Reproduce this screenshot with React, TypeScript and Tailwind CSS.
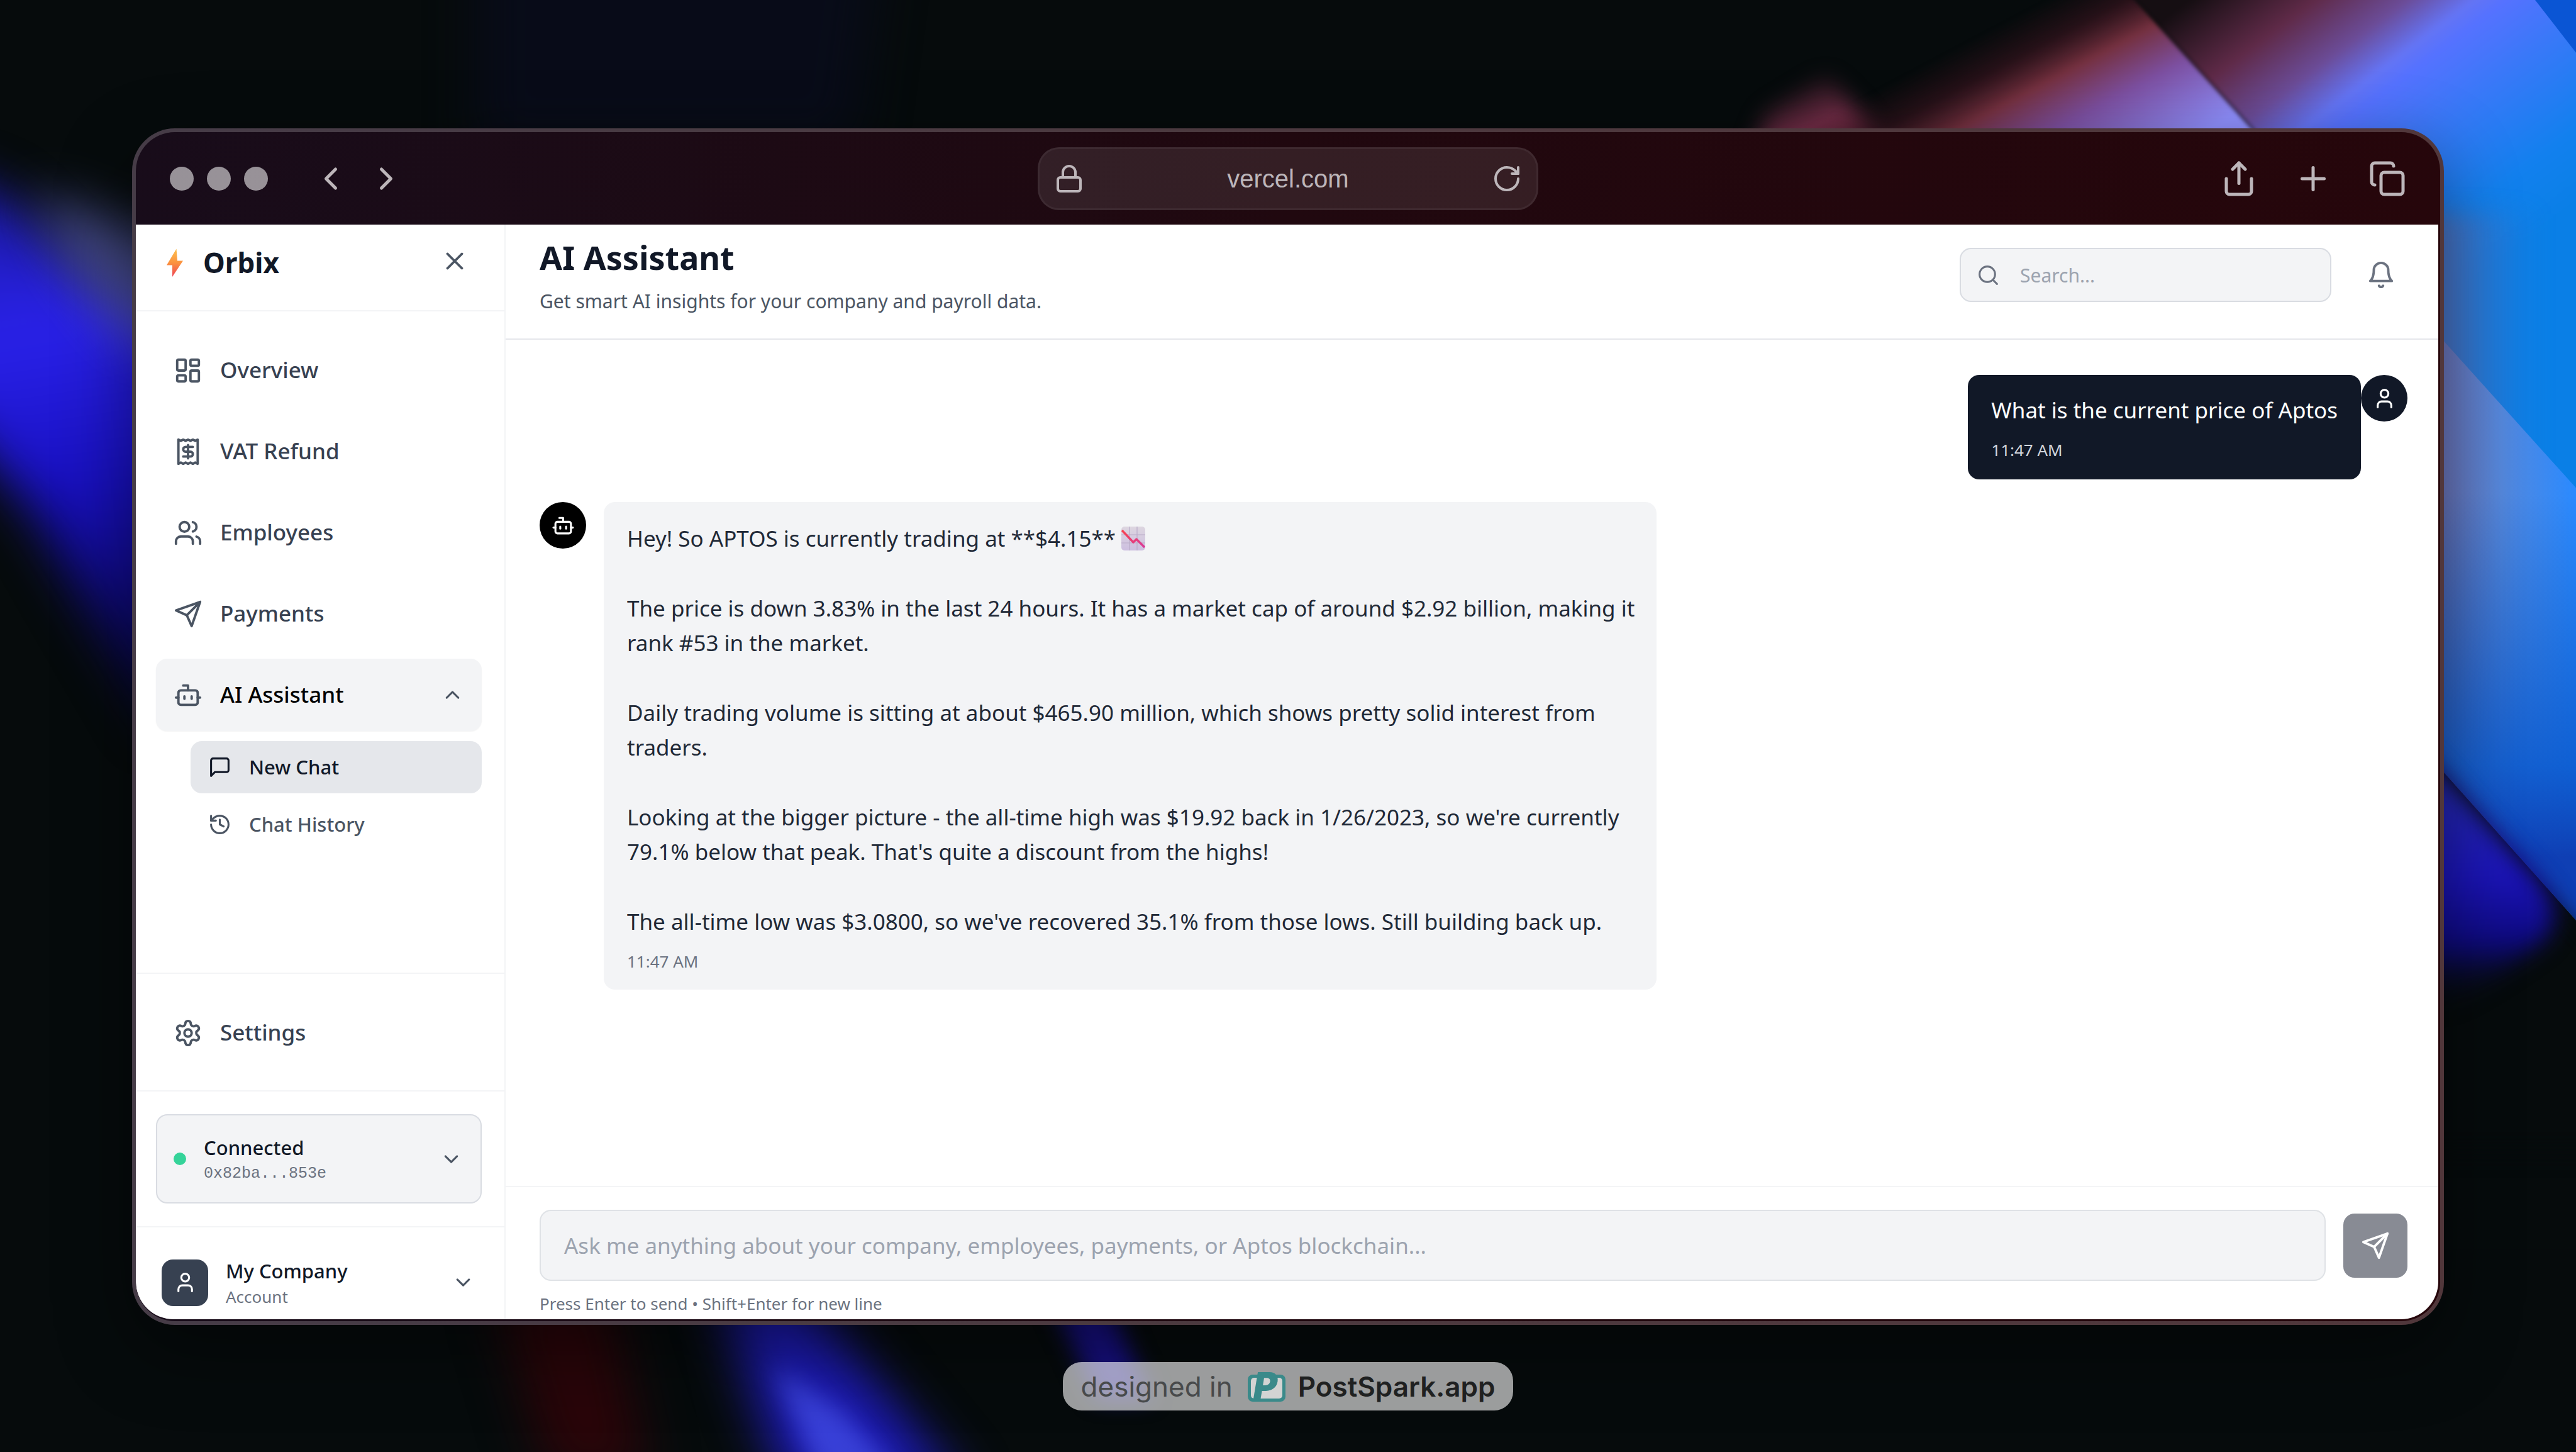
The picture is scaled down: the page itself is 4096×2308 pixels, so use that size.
import React from "react";

type IconProps = { className?: string; children: React.ReactNode };

function Icon({ className, children }: IconProps) {
  return (
    <svg
      viewBox="0 0 24 24"
      fill="none"
      stroke="currentColor"
      strokeWidth="2"
      strokeLinecap="round"
      strokeLinejoin="round"
      aria-hidden="true"
      className={`shrink-0 ${className ?? ""}`}
    >
      {children}
    </svg>
  );
}

const DashboardIcon = () => (
  <Icon className="size-[46px]">
    <rect x="3" y="3" width="7" height="9" rx="1" />
    <rect x="14" y="3" width="7" height="5" rx="1" />
    <rect x="14" y="12" width="7" height="9" rx="1" />
    <rect x="3" y="16" width="7" height="5" rx="1" />
  </Icon>
);

const ReceiptIcon = () => (
  <Icon className="size-[46px]">
    <path d="M4 2v20l2-1 2 1 2-1 2 1 2-1 2 1 2-1 2 1V2l-2 1-2-1-2 1-2-1-2 1-2-1-2 1Z" />
    <path d="M16 8h-6a2 2 0 1 0 0 4h4a2 2 0 1 1 0 4H8" />
    <path d="M12 17.5v-11" />
  </Icon>
);

const UsersIcon = () => (
  <Icon className="size-[46px]">
    <path d="M16 21v-2a4 4 0 0 0-4-4H6a4 4 0 0 0-4 4v2" />
    <circle cx="9" cy="7" r="4" />
    <path d="M22 21v-2a4 4 0 0 0-3-3.87" />
    <path d="M16 3.13a4 4 0 0 1 0 7.75" />
  </Icon>
);

const SendIcon = () => (
  <Icon className="size-[46px]">
    <path d="m22 2-7 20-4-9-9-4Z" />
    <path d="M22 2 11 13" />
  </Icon>
);

const BotIcon = ({ className }: { className: string }) => (
  <Icon className={className}>
    <path d="M12 8V4H8" />
    <rect width="16" height="12" x="4" y="8" rx="2" />
    <path d="M2 14h2" />
    <path d="M20 14h2" />
    <path d="M15 13v2" />
    <path d="M9 13v2" />
  </Icon>
);

const GearIcon = () => (
  <Icon className="size-[46px]">
    <path d="M12.22 2h-.44a2 2 0 0 0-2 2v.18a2 2 0 0 1-1 1.73l-.43.25a2 2 0 0 1-2 0l-.15-.08a2 2 0 0 0-2.73.73l-.22.38a2 2 0 0 0 .73 2.73l.15.1a2 2 0 0 1 1 1.72v.51a2 2 0 0 1-1 1.74l-.15.09a2 2 0 0 0-.73 2.73l.22.38a2 2 0 0 0 2.73.73l.15-.08a2 2 0 0 1 2 0l.43.25a2 2 0 0 1 1 1.73V20a2 2 0 0 0 2 2h.44a2 2 0 0 0 2-2v-.18a2 2 0 0 1 1-1.73l.43-.25a2 2 0 0 1 2 0l.15.08a2 2 0 0 0 2.73-.73l.22-.39a2 2 0 0 0-.73-2.73l-.15-.08a2 2 0 0 1-1-1.74v-.5a2 2 0 0 1 1-1.74l.15-.09a2 2 0 0 0 .73-2.73l-.22-.38a2 2 0 0 0-2.73-.73l-.15.08a2 2 0 0 1-2 0l-.43-.25a2 2 0 0 1-1-1.73V4a2 2 0 0 0-2-2z" />
    <circle cx="12" cy="12" r="3" />
  </Icon>
);

const UserIcon = ({ className }: { className: string }) => (
  <Icon className={className}>
    <path d="M19 21v-2a4 4 0 0 0-4-4H9a4 4 0 0 0-4 4v2" />
    <circle cx="12" cy="7" r="4" />
  </Icon>
);

const ChevronDown = () => (
  <Icon className="size-[37px] text-[#4b5563]">
    <path d="m6 9 6 6 6-6" />
  </Icon>
);

function Wallpaper() {
  return (
    <svg
      viewBox="0 0 1568 883"
      preserveAspectRatio="none"
      className="absolute inset-0 size-full"
      aria-hidden="true"
    >
      <defs>
        <filter id="b2" colorInterpolationFilters="sRGB" x="-50%" y="-50%" width="200%" height="200%"><feGaussianBlur stdDeviation="1.5" /></filter>
        <filter id="b8" colorInterpolationFilters="sRGB" x="-60%" y="-60%" width="220%" height="220%"><feGaussianBlur stdDeviation="7" /></filter>
        <filter id="b18" colorInterpolationFilters="sRGB" x="-80%" y="-80%" width="260%" height="260%"><feGaussianBlur stdDeviation="15" /></filter>
        <linearGradient id="blob" gradientUnits="userSpaceOnUse" x1="1090" y1="48" x2="1104" y2="84">
          <stop offset="0" stopColor="#8a3454" stopOpacity="0" />
          <stop offset="1" stopColor="#8a3454" />
        </linearGradient>
        <linearGradient id="wedge" gradientUnits="userSpaceOnUse" x1="1148" y1="52" x2="1202" y2="154">
          <stop offset="0" stopColor="#2a1018" stopOpacity="0" />
          <stop offset="0.2" stopColor="#30131c" stopOpacity="0.8" />
          <stop offset="0.38" stopColor="#74303f" />
          <stop offset="0.62" stopColor="#7c4fa0" />
          <stop offset="1" stopColor="#8f90ff" />
        </linearGradient>
        <linearGradient id="sky" gradientUnits="userSpaceOnUse" x1="1328" y1="4" x2="1472" y2="196">
          <stop offset="0" stopColor="#150e12" />
          <stop offset="0.19" stopColor="#5f2a48" />
          <stop offset="0.33" stopColor="#6b4c98" />
          <stop offset="0.43" stopColor="#6474f4" />
          <stop offset="0.48" stopColor="#5572ff" />
          <stop offset="0.62" stopColor="#3a78f8" />
          <stop offset="0.85" stopColor="#1280ee" />
          <stop offset="1" stopColor="#0a7fe6" />
        </linearGradient>
        <linearGradient id="haze" gradientUnits="userSpaceOnUse" x1="1485" y1="0" x2="1545" y2="0">
          <stop offset="0" stopColor="#4f70bc" />
          <stop offset="1" stopColor="#2a78d8" stopOpacity="0" />
        </linearGradient>
        <linearGradient id="lilac" gradientUnits="userSpaceOnUse" x1="1485" y1="320" x2="1568" y2="320">
          <stop offset="0" stopColor="#6c74b8" />
          <stop offset="0.45" stopColor="#5588dc" />
          <stop offset="1" stopColor="#2a8aff" />
        </linearGradient>
        <linearGradient id="deep" gradientUnits="userSpaceOnUse" x1="1528" y1="300" x2="1522" y2="520">
          <stop offset="0" stopColor="#0c55c0" stopOpacity="0" />
          <stop offset="0.75" stopColor="#0a58cc" stopOpacity="0.85" />
          <stop offset="1" stopColor="#0f3fb4" />
        </linearGradient>
        <linearGradient id="indigo" gradientUnits="userSpaceOnUse" x1="1520" y1="480" x2="1526" y2="612">
          <stop offset="0" stopColor="#2428b4" />
          <stop offset="0.4" stopColor="#1b14b8" />
          <stop offset="0.7" stopColor="#0e0a80" />
          <stop offset="1" stopColor="#060b0c" stopOpacity="0" />
        </linearGradient>
        <linearGradient id="left" gradientUnits="userSpaceOnUse" x1="10" y1="120" x2="60" y2="440">
          <stop offset="0" stopColor="#1c1aa8" />
          <stop offset="0.25" stopColor="#2a22ea" />
          <stop offset="0.55" stopColor="#1810c0" />
          <stop offset="1" stopColor="#06043c" />
        </linearGradient>
      </defs>
      <rect width="1568" height="883" fill="#060b0c" />
      <path d="M290-60 H540 L520 90 H290Z" fill="#090c1c" opacity="0.8" filter="url(#b18)" />

      <path d="M-80 90 L0 118 L60 175 L160 215 V440 L95 440 L20 310 L-80 200Z" fill="url(#left)" filter="url(#b18)" />
      <path d="M20 115 L70 135 L150 165 V225 L75 205 L40 160Z" fill="#6a70cc" opacity="0.6" filter="url(#b18)" />

      <path d="M1055 130 L1075 70 L1112 46 L1142 82 L1180 130Z" fill="url(#blob)" filter="url(#b8)" />
      <path d="M1100 110 V-10 H1291 L1400 110Z" fill="url(#wedge)" filter="url(#b2)" />
      <path d="M1291-10 L1400 110 V340 H1600 V-10Z" fill="url(#sky)" filter="url(#b2)" />
      <path d="M1540-4 L1568 32 V-4Z" fill="#0a55d4" />
      <path d="M1470 130 H1580 V320 H1470Z" fill="url(#haze)" filter="url(#b8)" />
      <path d="M1450 460 H1640 V760 H1450Z" fill="#060b0c" />
      <path d="M1470 188 L1580 310 V573 L1470 450Z" fill="url(#lilac)" />
      <path d="M1470 188 L1580 310 V573 L1470 450Z" fill="url(#deep)" />
      <path d="M1440 422 L1600 600 V700 H1440Z" fill="#060b0c" filter="url(#b8)" />
      <path d="M1440 420 L1540 529 Q1564 554 1548 572 Q1510 602 1440 645Z" fill="url(#indigo)" filter="url(#b8)" />

      <path d="M300 780 H370 L395 900 H335Z" fill="#2a0509" filter="url(#b18)" />
      <path d="M435 780 H485 L590 910 H480Z" fill="#1c1ab0" filter="url(#b18)" />
      <path d="M470 830 L512 858 L550 900 H500Z" fill="#4450e8" opacity="0.7" filter="url(#b8)" />
      <path d="M635 780 H670 L700 850 L668 850Z" fill="#160f80" filter="url(#b8)" />
    </svg>
  );
}

function BrowserBar() {
  return (
    <header className="grid h-[147px] shrink-0 grid-cols-[1fr_796px_1fr] items-center px-[54px] text-[#bdb6ba]">
      <div className="flex items-center">
        <div className="flex gap-[21px]">
          <span className="size-[38px] rounded-full bg-white/55" />
          <span className="size-[38px] rounded-full bg-white/55" />
          <span className="size-[38px] rounded-full bg-white/55" />
        </div>
        <div className="ml-[70px] flex gap-7">
          <button aria-label="Back">
            <Icon className="size-[60px]"><path d="m15 18-6-6 6-6" /></Icon>
          </button>
          <button aria-label="Forward">
            <Icon className="size-[60px]"><path d="m9 18 6-6-6-6" /></Icon>
          </button>
        </div>
      </div>
      <div className="flex h-[100px] items-center justify-between rounded-[34px] border-3 border-white/5 bg-white/9 px-[23px] font-['Liberation_Sans',sans-serif] text-[40px]">
        <Icon className="size-[48px]">
          <rect width="18" height="11" x="3" y="11" rx="2" />
          <path d="M7 11V7a5 5 0 0 1 10 0v4" />
        </Icon>
        <span>vercel.com</span>
        <button aria-label="Reload">
          <Icon className="size-[48px]">
            <path d="M21 12a9 9 0 1 1-9-9c2.52 0 4.93 1 6.74 2.74L21 8" />
            <path d="M21 3v5h-5" />
          </Icon>
        </button>
      </div>
      <div className="flex justify-end gap-[58px]">
        <button aria-label="Share">
          <Icon className="size-[60px]">
            <path d="M4 12v8a2 2 0 0 0 2 2h12a2 2 0 0 0 2-2v-8" />
            <path d="m16 6-4-4-4 4" />
            <path d="M12 2v13" />
          </Icon>
        </button>
        <button aria-label="New tab">
          <Icon className="size-[60px]"><path d="M5 12h14" /><path d="M12 5v14" /></Icon>
        </button>
        <button aria-label="Tabs">
          <Icon className="size-[60px]">
            <rect width="14" height="14" x="8" y="8" rx="2" />
            <path d="M4 16c-1.1 0-2-.9-2-2V4c0-1.1.9-2 2-2h10c1.1 0 2 .9 2 2" />
          </Icon>
        </button>
      </div>
    </header>
  );
}

function NavLink({ icon, label }: { icon: React.ReactNode; label: string }) {
  return (
    <a href="#" className="flex h-[115px] items-center gap-7 rounded-[18px] px-7 text-[35px] font-medium text-[#374151]">
      <span className="text-[#4b5563]">{icon}</span>
      {label}
    </a>
  );
}

function Sidebar() {
  return (
    <aside className="flex w-[588px] shrink-0 flex-col border-r-2 border-gray-100">
      <div className="flex h-[138px] shrink-0 items-start justify-between border-b-2 border-gray-100 pl-[49px] pr-14 pt-7">
        <div className="flex items-center gap-8">
          <svg viewBox="0 0 26 45" className="h-[45px] w-[26px]" aria-hidden="true">
            <defs>
              <linearGradient id="bolt" x1="0" y1="0" x2="0" y2="1">
                <stop offset="0" stopColor="#fdc04e" />
                <stop offset="0.5" stopColor="#fb923f" />
                <stop offset="1" stopColor="#ee4356" />
              </linearGradient>
            </defs>
            <path d="M15.5 0.5 L0 26.5 H9 V45 L26 19.5 H17Z" fill="url(#bolt)" />
          </svg>
          <span className="text-[44px] leading-[64px] font-bold text-[#111827]">Orbix</span>
        </div>
        <button aria-label="Close sidebar" className="mt-[7px] text-[#4b5563]">
          <Icon className="size-[46px]"><path d="M18 6 6 18" /><path d="m6 6 12 12" /></Icon>
        </button>
      </div>

      <nav className="flex flex-1 flex-col gap-3.5 pt-9 pl-8 pr-9">
        <NavLink icon={<DashboardIcon />} label="Overview" />
        <NavLink icon={<ReceiptIcon />} label="VAT Refund" />
        <NavLink icon={<UsersIcon />} label="Employees" />
        <NavLink icon={<SendIcon />} label="Payments" />
        <div>
          <button className="flex h-[115px] w-full items-center gap-7 rounded-[18px] bg-gray-100 px-7 text-left text-[35px] font-medium text-black shadow-xs">
            <BotIcon className="size-[46px] text-[#4b5563]" />
            <span className="flex-1">AI Assistant</span>
            <Icon className="size-[37px] text-[#4b5563]"><path d="m18 15-6-6-6 6" /></Icon>
          </button>
          <div className="mt-4 flex flex-col gap-2 pl-[55px]">
            <a href="#" className="flex h-[83px] items-center gap-7 rounded-[18px] bg-gray-200 px-7 text-[31px] font-medium text-[#111827]">
              <Icon className="size-[37px]">
                <path d="M21 15a2 2 0 0 1-2 2H7l-4 4V5a2 2 0 0 1 2-2h14a2 2 0 0 1 2 2z" />
              </Icon>
              New Chat
            </a>
            <a href="#" className="flex h-[83px] items-center gap-7 rounded-[18px] px-7 text-[31px] font-medium text-[#4b5563]">
              <Icon className="size-[37px]">
                <path d="M3 12a9 9 0 1 0 9-9 9.75 9.75 0 0 0-6.74 2.74L3 8" />
                <path d="M3 3v5h5" />
                <path d="M12 7v5l4 2" />
              </Icon>
              Chat History
            </a>
          </div>
        </div>
      </nav>

      <div className="border-t-2 border-gray-100 pb-[34px] pt-9 pl-8 pr-9">
        <NavLink icon={<GearIcon />} label="Settings" />
      </div>

      <div className="border-t-2 border-gray-100 py-9 pl-8 pr-9">
        <button className="flex h-[142px] w-full items-center rounded-[18px] border-2 border-[#d9dce2] bg-gray-100 pl-[26px] pr-7 text-left">
          <span className="size-[20px] rounded-full bg-[#34d399]" />
          <span className="ml-7 flex flex-1 flex-col">
            <span className="text-[31px] leading-[46px] font-medium text-[#111827]">Connected</span>
            <span className="font-['Liberation_Mono',monospace] text-[25px] leading-[37px] text-[#6b7280]">0x82ba...853e</span>
          </span>
          <ChevronDown />
        </button>
      </div>

      <div className="border-t-2 border-gray-100 pb-[17px] pl-[41px] pr-[47px] pt-[46px]">
        <button className="flex w-full items-center gap-7 text-left">
          <span className="flex size-[74px] items-center justify-center rounded-[18px] bg-[#374151] text-white">
            <UserIcon className="size-[37px]" />
          </span>
          <span className="flex flex-1 flex-col">
            <span className="text-[31px] leading-[46px] font-medium text-[#111827]">My Company</span>
            <span className="text-[26px] leading-[37px] text-[#6b7280]">Account</span>
          </span>
          <ChevronDown />
        </button>
      </div>
    </aside>
  );
}

function ChartDown() {
  return (
    <svg viewBox="0 0 38 38" role="img" aria-label="Chart decreasing" className="inline-block size-[38px] align-[-6px]">
      <defs>
        <linearGradient id="paper" x1="0" y1="0" x2="0" y2="1">
          <stop offset="0" stopColor="#ddd6e0" />
          <stop offset="1" stopColor="#cdbfe0" />
        </linearGradient>
        <linearGradient id="fall" x1="0" y1="0" x2="1" y2="1">
          <stop offset="0" stopColor="#f8434f" />
          <stop offset="1" stopColor="#d93a9a" />
        </linearGradient>
      </defs>
      <rect width="38" height="38" rx="5" fill="url(#paper)" />
      <path d="M13 0V38M25 0V38M0 13H38M0 26H38" stroke="#b9acc8" strokeWidth="1.2" />
      <path d="M1 6 L19 25 L24 20 L37 33" fill="none" stroke="url(#fall)" strokeWidth="3.4" strokeLinejoin="round" />
    </svg>
  );
}

function Chat() {
  return (
    <section className="flex flex-1 flex-col gap-9 pl-[54px] pr-[49px] pt-[56px]">
      <div className="flex items-start justify-end">
        <div className="rounded-[18px] bg-[#111827] px-[37px] py-7 text-white">
          <p className="text-[35px] leading-[55px]">What is the current price of Aptos</p>
          <p className="mt-[18px] text-[26px] leading-[37px] text-gray-300">11:47 AM</p>
        </div>
        <span className="flex size-[74px] items-center justify-center rounded-full bg-[#111827] text-white">
          <UserIcon className="size-[37px]" />
        </span>
      </div>
      <div className="flex items-start gap-7">
        <span className="flex size-[74px] shrink-0 items-center justify-center rounded-full bg-black text-white">
          <BotIcon className="size-[37px]" />
        </span>
        <div className="max-w-[1674px] rounded-[18px] bg-gray-100 pb-[26px] pl-[37px] pr-7 pt-[30px] text-[#1f2937]">
          <div className="flex flex-col gap-14 text-[35px] leading-[55px]">
            <p>Hey! So APTOS is currently trading at **$4.15** <ChartDown /></p>
            <p>The price is down 3.83% in the last 24 hours. It has a market cap of around $2.92 billion, making it rank #53 in the market.</p>
            <p>Daily trading volume is sitting at about $465.90 million, which shows pretty solid interest from traders.</p>
            <p>Looking at the bigger picture - the all-time high was $19.92 back in 1/26/2023, so we're currently 79.1% below that peak. That's quite a discount from the highs!</p>
            <p>The all-time low was $3.0800, so we've recovered 35.1% from those lows. Still building back up.</p>
          </div>
          <p className="mt-[18px] text-[26px] leading-[37px] text-[#6b7280]">11:47 AM</p>
        </div>
      </div>
    </section>
  );
}

function Main() {
  return (
    <main className="flex min-w-0 flex-1 flex-col">
      <div className="flex items-center justify-between border-b-2 border-gray-200 pb-[36px] pl-[54px] pr-[49px] pt-[15px]">
        <div>
          <h1 className="text-[52px] leading-[74px] font-bold text-[#111827]">AI Assistant</h1>
          <p className="mt-2.5 text-[30px] leading-[46px] text-[#4b5563]">Get smart AI insights for your company and payroll data.</p>
        </div>
        <div className="flex items-center gap-[37px]">
          <label className="flex h-[86px] w-[591px] items-center gap-8 rounded-[18px] border-2 border-[#d9dce2] bg-gray-100 px-[25px] text-[#6b7280]">
            <Icon className="size-[37px]"><circle cx="11" cy="11" r="8" /><path d="m21 21-4.3-4.3" /></Icon>
            <input type="search" aria-label="Search" placeholder="Search..." className="min-w-0 flex-1 bg-transparent text-[30px] outline-none placeholder:text-[#9ca3af]" />
          </label>
          <button aria-label="Notifications" className="flex size-[84px] items-center justify-center text-[#6b7280]">
            <Icon className="size-[46px]">
              <path d="M6 8a6 6 0 0 1 12 0c0 7 3 9 3 9H3s3-2 3-9" />
              <path d="M10.3 21a1.94 1.94 0 0 0 3.4 0" />
            </Icon>
          </button>
        </div>
      </div>
      <Chat />
      <form className="border-t-2 border-gray-100 pb-1.5 pl-[54px] pr-[49px] pt-9">
        <div className="flex items-center gap-7">
          <textarea
            rows={1}
            aria-label="Message"
            placeholder="Ask me anything about your company, employees, payments, or Aptos blockchain..."
            className="h-[113px] min-w-0 flex-1 resize-none rounded-[18px] border-2 border-[#dfe2e6] bg-gray-100 px-[37px] py-[27px] text-[35px] leading-[55px] outline-none placeholder:text-[#9ca3af]"
          />
          <button type="button" aria-label="Send" className="flex size-[102px] items-center justify-center rounded-[18px] bg-[#888b94] text-white">
            <SendIcon />
          </button>
        </div>
        <p className="mt-[18px] text-[26px] leading-[37px] text-[#6b7280]">Press Enter to send • Shift+Enter for new line</p>
      </form>
    </main>
  );
}

function Badge() {
  return (
    <a href="#" className="mt-[59px] flex h-[77px] items-center rounded-[30px] bg-white/60 px-[29px] font-['Inter',sans-serif] text-[44px]">
      <span className="text-[#484a4b]">designed in</span>
      <svg viewBox="0 0 60 48" className="ml-6 mr-5 h-[48px] w-[60px] overflow-visible" aria-hidden="true">
        <rect y="5" width="60" height="43" rx="8" fill="#3a8a8a" />
        <rect x="5" y="10" width="50" height="33" rx="5" fill="#d3d4d3" />
        <text x="9" y="43" fontFamily="Inter" fontWeight="900" fontStyle="italic" fontSize="58" fill="#3a8a8a">P</text>
      </svg>
      <span className="font-semibold text-[#1f2121]">PostSpark.app</span>
    </a>
  );
}

export default function App() {
  return (
    <div className="relative flex min-h-screen w-full flex-col items-center overflow-hidden bg-[#060b0c] px-[210px] pb-[66px] pt-[204px] font-['Noto_Sans',sans-serif]">
      <Wallpaper />
      <div className="relative flex w-full flex-1 flex-col overflow-hidden rounded-[68px] border-6 border-white/20 bg-gradient-to-r from-[#180c1a] via-[#20080f] to-[#26060b] bg-origin-border pb-[3px] shadow-[0_40px_120px_rgba(0,0,0,0.45)]">
        <BrowserBar />
        <div className="mr-[3px] flex flex-1 overflow-hidden rounded-b-[60px] bg-white">
          <Sidebar />
          <Main />
        </div>
      </div>
      <div className="relative">
        <Badge />
      </div>
    </div>
  );
}
